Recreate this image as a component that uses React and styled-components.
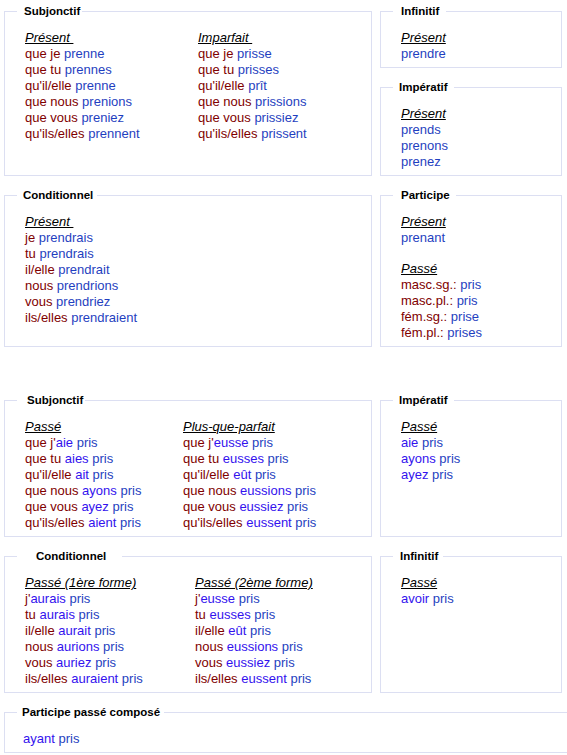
import React from "react";
import styled, { createGlobalStyle } from "styled-components";

const GlobalStyle = createGlobalStyle`
  html, body { margin: 0; padding: 0; background: #fff; overflow: hidden; }
  body {
    font-family: "Liberation Sans", Arial, sans-serif;
    font-size: 13px;
    line-height: 16px;
    color: #000;
  }
`;

const Page = styled.div`
  padding: 4px 0 0 4px;
  width: 700px;
`;

const Section = styled.div`
  display: grid;
  grid-template-columns: 368px 182px;
  column-gap: 8px;
  row-gap: 12px;
  align-items: stretch;
  & + & { margin-top: 46px; }
`;

const Box = styled.fieldset`
  margin: 0;
  min-width: 0;
  border: 1px solid #dcdff2;
  padding: 12px 8px 5px ${(p) => p.$pl ?? 20}px;
  grid-row: ${(p) => (p.$span ? "span 2" : "auto")};
  grid-column: ${(p) => (p.$wide ? "1 / -1" : "auto")};
  width: ${(p) => (p.$wide ? "640px" : "auto")};
  box-sizing: border-box;
`;

const Legend = styled.legend`
  font-family: "Liberation Sans", Arial, sans-serif;
  font-weight: bold;
  font-size: 11.5px;
  line-height: 14px;
  color: #000;
  margin-left: ${(p) => p.$ml ?? -8}px;
  padding: 0 ${(p) => p.$pr ?? 4}px 0 ${(p) => p.$pl ?? 6}px;
  white-space: nowrap;
`;

const Cols = styled.div`
  display: flex;
`;

const Col = styled.div`
  flex: none;
  width: ${(p) => (p.$w ? `${p.$w}px` : "auto")};
`;

const Tense = styled.div`
  font-style: italic;
  text-decoration: underline;
  white-space: pre;
`;

const Line = styled.div`
  white-space: nowrap;
`;

const Pron = styled.span`
  color: #800000;
`;

const Verb = styled.span`
  color: #1f3fc0;
`;

const Aux = styled.span`
  color: #3312ee;
`;

const Spacer = styled.div`
  height: ${(p) => p.$h ?? 16}px;
`;

function Forms({ label, rows }) {
  return (
    <div>
      <Tense>{label}</Tense>
      {rows.map(([pron, aux, verb], i) => (
        <Line key={i}>
          {pron && <Pron>{pron}</Pron>}
          {aux && <Aux>{aux}</Aux>}
          {aux && verb ? " " : null}
          {verb && <Verb>{verb}</Verb>}
        </Line>
      ))}
    </div>
  );
}

const subjPresent = [
  ["que je ", null, "prenne"],
  ["que tu ", null, "prennes"],
  ["qu'il/elle ", null, "prenne"],
  ["que nous ", null, "prenions"],
  ["que vous ", null, "preniez"],
  ["qu'ils/elles ", null, "prennent"],
];
const subjImparfait = [
  ["que je ", null, "prisse"],
  ["que tu ", null, "prisses"],
  ["qu'il/elle ", null, "prît"],
  ["que nous ", null, "prissions"],
  ["que vous ", null, "prissiez"],
  ["qu'ils/elles ", null, "prissent"],
];
const condPresent = [
  ["je ", null, "prendrais"],
  ["tu ", null, "prendrais"],
  ["il/elle ", null, "prendrait"],
  ["nous ", null, "prendrions"],
  ["vous ", null, "prendriez"],
  ["ils/elles ", null, "prendraient"],
];
const partPasse = [
  ["masc.sg.: ", null, "pris"],
  ["masc.pl.: ", null, "pris"],
  ["fém.sg.: ", null, "prise"],
  ["fém.pl.: ", null, "prises"],
];
const subjPasse = [
  ["que j'", "aie", "pris"],
  ["que tu ", "aies", "pris"],
  ["qu'il/elle ", "ait", "pris"],
  ["que nous ", "ayons", "pris"],
  ["que vous ", "ayez", "pris"],
  ["qu'ils/elles ", "aient", "pris"],
];
const subjPqp = [
  ["que j'", "eusse", "pris"],
  ["que tu ", "eusses", "pris"],
  ["qu'il/elle ", "eût", "pris"],
  ["que nous ", "eussions", "pris"],
  ["que vous ", "eussiez", "pris"],
  ["qu'ils/elles ", "eussent", "pris"],
];
const condPasse1 = [
  ["j'", "aurais", "pris"],
  ["tu ", "aurais", "pris"],
  ["il/elle ", "aurait", "pris"],
  ["nous ", "aurions", "pris"],
  ["vous ", "auriez", "pris"],
  ["ils/elles ", "auraient", "pris"],
];
const condPasse2 = [
  ["j'", "eusse", "pris"],
  ["tu ", "eusses", "pris"],
  ["il/elle ", "eût", "pris"],
  ["nous ", "eussions", "pris"],
  ["vous ", "eussiez", "pris"],
  ["ils/elles ", "eussent", "pris"],
];

export default function App() {
  return (
    <>
      <GlobalStyle />
      <Page>
        <Section>
          <Box $span>
            <Legend $pl={7} $pr={2}>Subjonctif</Legend>
            <Cols>
              <Col $w={173}>
                <Forms label={"Présent\u00a0"} rows={subjPresent} />
              </Col>
              <Col>
                <Forms label={"Imparfait\u00a0"} rows={subjImparfait} />
              </Col>
            </Cols>
          </Box>
          <Box>
            <Legend $pl={8} $pr={7}>Infinitif</Legend>
            <Forms label="Présent" rows={[[null, null, "prendre"]]} />
          </Box>
          <Box>
            <Legend $pl={6} $pr={6}>Impératif</Legend>
            <Forms
              label="Présent"
              rows={[
                [null, null, "prends"],
                [null, null, "prenons"],
                [null, null, "prenez"],
              ]}
            />
          </Box>
          <Box>
            <Legend $pl={6} $pr={4}>Conditionnel</Legend>
            <Forms label={"Présent\u00a0"} rows={condPresent} />
          </Box>
          <Box>
            <Legend $pl={8} $pr={6}>Participe</Legend>
            <Forms label="Présent" rows={[[null, null, "prenant"]]} />
            <Spacer $h={15} />
            <Forms label="Passé" rows={partPasse} />
          </Box>
        </Section>

        <Section>
          <Box>
            <Legend $pl={10} $pr={2}>Subjonctif</Legend>
            <Cols>
              <Col $w={158}>
                <Forms label="Passé" rows={subjPasse} />
              </Col>
              <Col>
                <Forms label="Plus-que-parfait" rows={subjPqp} />
              </Col>
            </Cols>
          </Box>
          <Box>
            <Legend $pl={6} $pr={6}>Impératif</Legend>
            <Forms
              label="Passé"
              rows={[
                [null, "aie", "pris"],
                [null, "ayons", "pris"],
                [null, "ayez", "pris"],
              ]}
            />
          </Box>
          <Box>
            <Legend $pl={19} $pr={16}>Conditionnel</Legend>
            <Cols>
              <Col $w={170}>
                <Forms label="Passé (1ère forme)" rows={condPasse1} />
              </Col>
              <Col>
                <Forms label="Passé (2ème forme)" rows={condPasse2} />
              </Col>
            </Cols>
          </Box>
          <Box>
            <Legend $pl={7} $pr={5}>Infinitif</Legend>
            <Forms label="Passé" rows={[[null, "avoir", "pris"]]} />
          </Box>
          <Box $wide $pl={18}>
            <Legend $ml={-6} $pl={5} $pr={4}>Participe passé composé</Legend>
            <Line>
              <Aux>ayant</Aux> <Verb>pris</Verb>
            </Line>
          </Box>
        </Section>
      </Page>
    </>
  );
}
